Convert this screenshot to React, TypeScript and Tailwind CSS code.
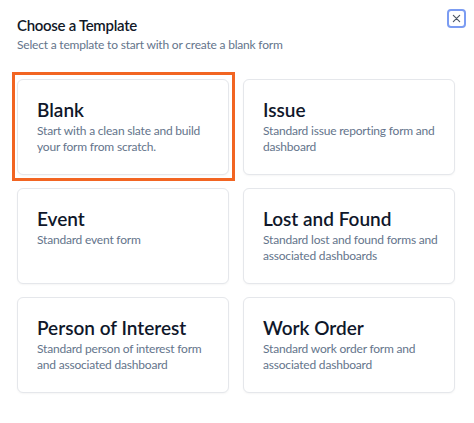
import React from "react";

const cards = [
  { title: "Blank", desc: "Start with a clean slate and build your form from scratch.", selected: true },
  { title: "Issue", desc: "Standard issue reporting form and dashboard" },
  { title: "Event", desc: "Standard event form" },
  { title: "Lost and Found", desc: "Standard lost and found forms and associated dashboards" },
  { title: "Person of Interest", desc: "Standard person of interest form and associated dashboard" },
  { title: "Work Order", desc: "Standard work order form and associated dashboard" },
];

export default function App() {
  return (
    <div
      className="relative w-[474px] h-[423px] bg-white px-[17px] pt-[14px]"
      style={{ fontFamily: 'Lato, "Noto Sans", sans-serif' }}
    >
      <button className="absolute top-[9px] left-[447px] w-[19px] h-[19px] rounded-[4px] border-2 border-[#7b9cf2] flex items-center justify-center bg-white">
        <svg width="9" height="9" viewBox="0 0 10 10" fill="none" stroke="#4b5563" strokeWidth="1.3" strokeLinecap="round">
          <path d="M1.5 1.5 L8.5 8.5 M8.5 1.5 L1.5 8.5" />
        </svg>
      </button>
      <h1 className="text-[15px] leading-[22px] font-semibold tracking-[-0.3px] text-[#111827]">Choose a Template</h1>
      <p className="text-[12px] leading-[16px] tracking-[-0.2px] text-[#64748b] mt-[1px]">
        Select a template to start with or create a blank form
      </p>
      <div className="grid grid-cols-[212px_212px] gap-x-[14px] gap-y-[13px] mt-[26px]">
        {cards.map((c) => (
          <div
            key={c.title}
            className="relative h-[96px] rounded-[6px] border border-[#e5e7eb] bg-white shadow-[0_1px_2px_rgba(0,0,0,0.04)] pl-[19px] pr-[12px] pt-[19px]"
          >
            {c.selected && (
              <span className="absolute left-[-6px] right-[-7px] top-[-8px] bottom-[-7px] border-[3px] border-[#f26522] pointer-events-none" />
            )}
            <div className="text-[19px] leading-[22px] font-semibold text-[#0f172a]">{c.title}</div>
            <div className="text-[12px] leading-[16px] tracking-[-0.2px] text-[#64748b] mt-[2px]">{c.desc}</div>
          </div>
        ))}
      </div>
    </div>
  );
}
